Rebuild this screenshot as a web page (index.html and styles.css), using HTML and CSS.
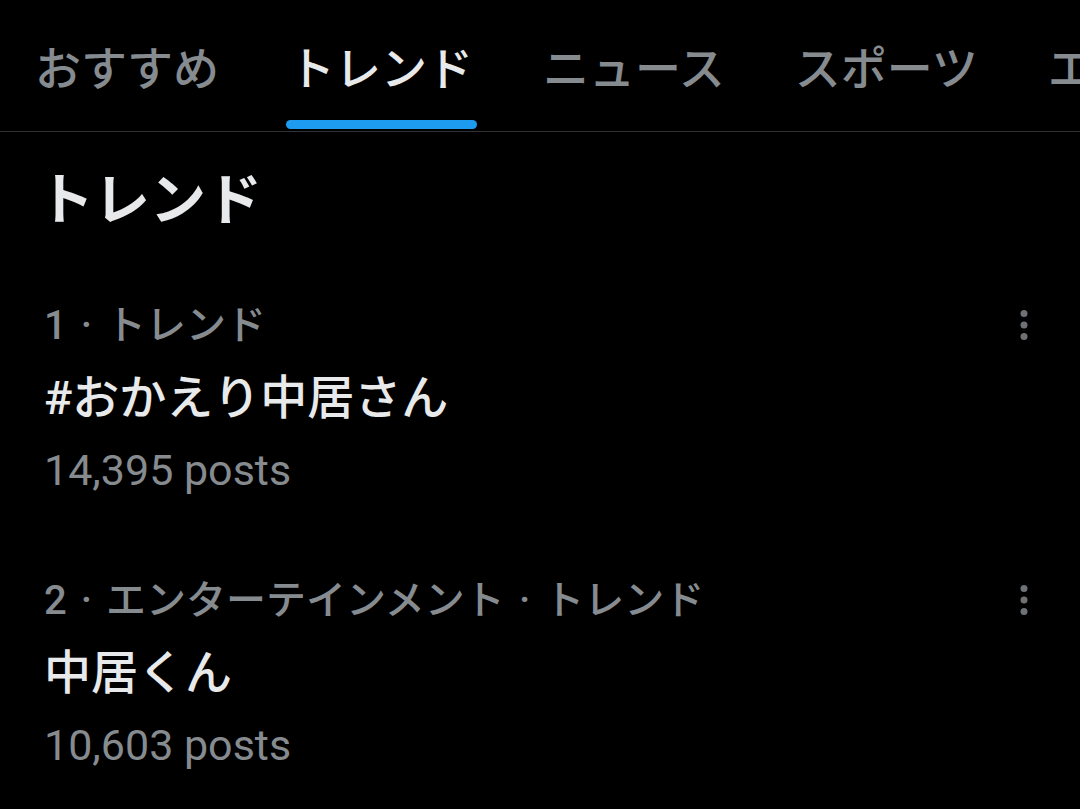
FILE: index.html
```html
<!DOCTYPE html>
<html lang="ja">
<head>
    <meta charset="UTF-8">
    <meta name="viewport" content="width=device-width, initial-scale=1.0">
    <title>トレンド</title>
    <link rel="stylesheet" href="styles.css">
</head>
<body>
    <nav class="tabs">
        <div class="tab">おすすめ</div>
        <div class="tab active">トレンド<span class="indicator"></span></div>
        <div class="tab">ニュース</div>
        <div class="tab">スポーツ</div>
        <div class="tab">エンタメ</div>
    </nav>

    <h1 class="section-title">トレンド</h1>

    <div class="trend">
        <div class="trend-body">
            <div class="trend-label"><span class="rank">1</span><span class="sep">·</span>トレンド</div>
            <div class="trend-name">#おかえり中居さん</div>
            <div class="trend-count">14,395 posts</div>
        </div>
        <svg class="more" width="10" height="30" viewBox="0 0 10 30">
            <circle cx="5" cy="3.5" r="3.5"/>
            <circle cx="5" cy="15" r="3.5"/>
            <circle cx="5" cy="26.5" r="3.5"/>
        </svg>
    </div>

    <div class="trend">
        <div class="trend-body">
            <div class="trend-label"><span class="rank">2</span><span class="sep">·</span>エンターテインメント<span class="sep">·</span>トレンド</div>
            <div class="trend-name">中居くん</div>
            <div class="trend-count">10,603 posts</div>
        </div>
        <svg class="more" width="10" height="30" viewBox="0 0 10 30">
            <circle cx="5" cy="3.5" r="3.5"/>
            <circle cx="5" cy="15" r="3.5"/>
            <circle cx="5" cy="26.5" r="3.5"/>
        </svg>
    </div>
</body>
</html>
```

FILE: styles.css
```css
body {
    margin: 0;
    background-color: #000;
    color: #e7e9ea;
    font-family: Roboto, "Noto Sans CJK JP", sans-serif;
    overflow: hidden;
}
.tabs {
    display: flex;
    height: 131px;
    border-bottom: 1px solid #2f3336;
    white-space: nowrap;
}
.tab {
    position: relative;
    flex-shrink: 0;
    padding: 42px 35px 0;
    font-size: 46px;
    line-height: 55px;
    font-weight: 500;
    color: #868b90;
}
.tab.active {
    color: #e7e9ea;
}
.indicator {
    position: absolute;
    left: 32px;
    right: 31px;
    bottom: 2px;
    height: 9px;
    border-radius: 5px;
    background-color: #1d9bf0;
}
.section-title {
    margin: 35px 0 0;
    padding-left: 38px;
    font-size: 56px;
    line-height: 67px;
    font-weight: 700;
}
.trend {
    display: flex;
    align-items: flex-start;
    padding: 56px 51px 3px 44px;
}
.trend-body {
    flex: 1;
}
.trend-label {
    font-size: 40px;
    line-height: 72px;
    font-weight: 500;
    color: #868b90;
}
.sep {
    padding: 0 14px;
}
.trend-name {
    font-size: 47px;
    line-height: 72px;
    font-weight: 500;
}
.trend-count {
    font-size: 43px;
    line-height: 72px;
    color: #868b90;
}
.more {
    margin-top: 20px;
    fill: #6e7175;
}
```
